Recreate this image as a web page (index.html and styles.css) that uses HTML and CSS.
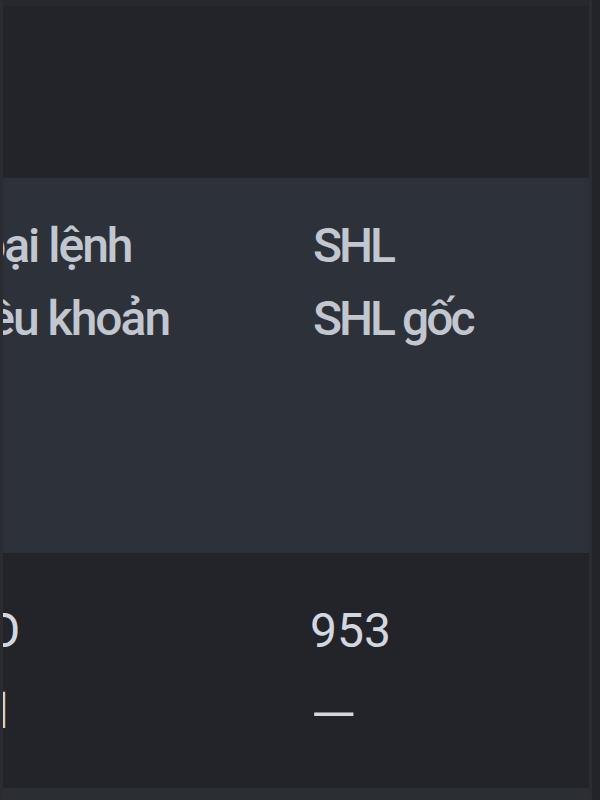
FILE: index.html
```html
<!DOCTYPE html>
<html lang="vi">
<head>
    <meta charset="UTF-8">
    <meta name="viewport" content="width=device-width, initial-scale=1.0">
    <title>Chi tiết lệnh</title>
    <link rel="stylesheet" href="styles.css">
</head>
<body>
    <div class="panel">
        <div class="toolbar"></div>

        <div class="table-head">
            <div class="row">
                <div class="cell first"><span class="shift-a">Loại lệnh</span></div>
                <div class="cell">SHL</div>
            </div>
            <div class="row">
                <div class="cell first"><span class="shift-b">Điều khoản</span></div>
                <div class="cell">SHL gốc</div>
            </div>
        </div>

        <div class="table-body">
            <div class="row">
                <div class="cell first"><span class="shift-c">LO</span></div>
                <div class="cell">953</div>
            </div>
            <div class="row">
                <div class="cell first"><span class="shift-d">Normal</span></div>
                <div class="cell"><span class="dash">—</span></div>
            </div>
        </div>
    </div>
</body>
</html>
```

FILE: styles.css
```css
body {
    margin: 0;
    background-color: #232429;
    font-family: Roboto, "Liberation Sans", sans-serif;
    font-size: 48px;
    overflow: hidden;
}
.panel {
    width: 592px;
    height: 800px;
    border-left: 3px solid #2a2c31;
    border-right: 3px solid #2b2d33;
    background-color: #232429;
    box-sizing: border-box;
}
.toolbar {
    height: 172px;
    border-top: 6px solid #27282d;
}
.table-head {
    background-color: #2d313a;
    padding: 31px 0 198px;
    color: #c2c6ce;
    font-weight: 500;
    letter-spacing: -3px;
}
.table-head .row {
    line-height: 73px;
}
.table-head .first {
    letter-spacing: -2px;
}
.table-body {
    padding: 37px 0 36px;
    color: #d3d7df;
    border-bottom: 12px solid #2b2e35;
}
.table-body .row {
    line-height: 81px;
}
.row {
    display: grid;
    grid-template-columns: 307px 1fr;
    white-space: nowrap;
}
.cell {
    overflow: hidden;
}
.table-head .cell {
    padding-left: 3px;
}
.table-head .first {
    padding-left: 0;
}
.first span {
    display: inline-block;
}
.shift-a {
    margin-left: -48px;
}
.shift-b {
    margin-left: -54px;
}
.shift-c {
    margin-left: -40px;
}
.shift-d {
    margin-left: -152px;
}
.dash {
    display: inline-block;
    transform: scaleX(1.25) translateY(3px);
    transform-origin: left center;
}
```
